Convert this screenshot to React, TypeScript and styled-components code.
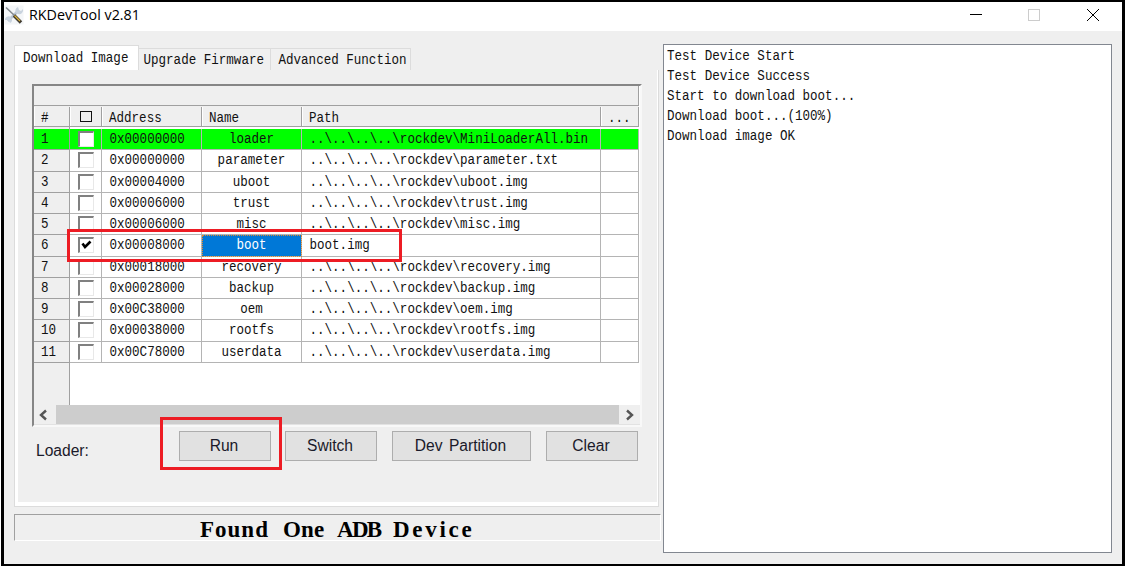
import React from 'react';
import styled, { createGlobalStyle, css } from 'styled-components';

const Global = createGlobalStyle`
  * { box-sizing: border-box; }
  body { margin: 0; background: #fff; overflow: hidden; }
`;

const mono = css`
  font-family: 'Liberation Mono', monospace;
  font-size: 12.55px;
  color: #111;
  white-space: pre;
`;

const Window = styled.div`
  position: relative;
  width: 1124px;
  height: 566px;
  margin-left: 1px;
  border: solid #000;
  border-width: 2px 3px 2px 3px;
  background: #efefef;
  display: flex;
  flex-direction: column;
`;

const TitleBar = styled.header`
  height: 29px;
  flex: none;
  background: #fff;
  display: flex;
  align-items: center;
`;

const Title = styled.span`
  font: 14.3px 'Open Sans', sans-serif;
  color: #000;
  margin-left: 5px;
  flex: 1;
  position: relative;
  top: -2px;
`;

const Logo = styled.svg`
  display: block;
  margin-bottom: 4px;
`;

const Controls = styled.svg`
  width: 160px;
  height: 29px;
  display: block;
`;

const Body = styled.main`
  flex: 1;
  display: flex;
  padding: 13px 10px 11px 10px;
`;

const Left = styled.section`
  width: 647px;
  display: flex;
  flex-direction: column;
`;

const Tabs = styled.nav`
  display: flex;
  align-items: flex-end;
  height: 26px;
  padding-top: 1px;
`;

const Tab = styled.div<{ $w: number; $pad: number; $active?: boolean }>`
  ${mono}
  width: ${p => p.$w}px;
  height: ${p => (p.$active ? 25 : 22)}px;
  padding-left: ${p => p.$pad}px;
  line-height: ${p => (p.$active ? 26 : 25)}px;
  border: solid #dcdcdc;
  border-width: ${p => (p.$active ? '1px 1px 0 1px' : '1px 1px 0 0')};
  background: ${p => (p.$active ? '#fff' : '#f0f0f0')};
`;

const Tall = styled.span`
  display: inline-block;
  transform: scaleY(1.15);
  white-space: pre;
`;

const Page = styled.div`
  width: 645px;
  height: 437px;
  border: solid #dcdcdc;
  border-width: 0 1px 1px 1px;
  background: #fff;
  padding: 0 1px 4px 3px;
  display: flex;
`;

const PageInner = styled.div`
  flex: 1;
  background: #efefef;
  padding: 14px 0 0 14px;
`;

const Grid = styled.div`
  width: 610px;
  height: 343px;
  border: solid;
  border-width: 2px;
  border-color: #868686 #f8f8f8 #f8f8f8 #868686;
  background: #fff;
  display: flex;
  flex-direction: column;
`;

const TopBand = styled.div`
  height: 20px;
  flex: none;
  background: #efefef;
  border: solid #a0a0a0;
  border-width: 0 1px 1px 0;
  margin-right: 1px;
`;

const columns = '36px 32px 100px 100px 299px 38px';

const HeadRow = styled.div`
  display: grid;
  grid-template-columns: ${columns};
  grid-template-rows: 100%;
  height: 21px;
  flex: none;
  background: #efefef;
  margin-right: 1px;
  border-bottom: 1px solid #a0a0a0;
`;

const HeadCell = styled.div<{ $pad?: number }>`
  ${mono}
  line-height: 24px;
  padding-left: ${p => p.$pad ?? 7}px;
  border-right: 1px solid #a0a0a0;
  margin-top: 1px;
  box-shadow: inset 1px 0 #fff;
`;

const HeadBox = styled.span`
  display: block;
  width: 12px;
  height: 11px;
  margin-top: 4px;
  border: 1px solid #111;
`;

const Rows = styled.div`
  flex: 1;
  padding-top: 2px;
  background: linear-gradient(90deg, #efefef 35px, #a0a0a0 35px, #a0a0a0 36px, #fff 36px);
`;

const Row = styled.div<{ $done?: boolean }>`
  display: grid;
  grid-template-columns: ${columns};
  grid-template-rows: 100%;
  height: 21.25px;
  margin-right: 1px;
  background: ${p => (p.$done ? '#00ff00' : 'transparent')};
`;

const Cell = styled.div<{ $center?: boolean; $selected?: boolean; $head?: boolean }>`
  ${mono}
  line-height: 23px;
  padding-left: ${p => (p.$center ? 0 : 7.5)}px;
  text-align: ${p => (p.$center ? 'center' : 'left')};
  border: solid ${p => (p.$head ? '#a0a0a0' : '#b4b4b4')};
  border-width: 0 1px 1px 0;
  ${p => p.$head && css`padding-left: 7px;`}
  ${p => p.$selected && css`
    color: #fff;
    background: #0078d7;
    outline: 1px dotted #e08a30;
    outline-offset: -1px;
  `}
`;

const Check = styled.span`
  display: block;
  width: 16px;
  height: 16px;
  margin-top: 2px;
  background: #fff;
  border: solid;
  border-width: 2px 1px 1px 2px;
  border-color: #808080 #e8e8e8 #e8e8e8 #808080;
  svg { display: block; }
`;

const ScrollBar = styled.div`
  height: 20px;
  flex: none;
  background: #efefef;
  display: flex;
  align-items: flex-start;
  justify-content: space-between;
  border-bottom: 1px solid #e2e2e2;
`;

const Thumb = styled.div`
  width: 563px;
  height: 19px;
  background: #cdcdcd;
`;

const Arrow = styled.svg`
  width: 21px;
  height: 19px;
`;

const Actions = styled.div`
  display: flex;
  margin-top: 4px;
  font: 15.6px 'Liberation Sans', sans-serif;
  color: #1a1a2a;
`;

const LoaderLabel = styled.div`
  width: 147px;
  flex: none;
  padding: 11px 0 0 4px;
`;

const Button = styled.button<{ $w: number; $gap: number }>`
  width: ${p => p.$w}px;
  height: 30px;
  margin: 0 ${p => p.$gap}px 0 0;
  padding: 0 2px 0 0;
  border: 1px solid #adadad;
  background: #e1e1e1;
  font: inherit;
  color: inherit;
  word-spacing: 2px;
  flex: none;
`;

const Status = styled.div`
  width: 647px;
  height: 27px;
  margin-top: 7px;
  padding-left: 185px;
  border: solid;
  border-width: 1px;
  border-color: #a0a0a0 #fff #fff #a0a0a0;
  font: bold 23px/29px 'Liberation Serif', serif;
  color: #000;
  display: flex;
  white-space: pre;
`;

const Word = styled.span<{ $w: number; $track: number }>`
  width: ${p => p.$w}px;
  letter-spacing: ${p => p.$track}px;
`;

const Log = styled.div`
  width: 449px;
  margin-left: 2px;
  border: 1px solid #828790;
  background: #fff;
  padding: 2px 3px;
`;

const LogLine = styled.div`
  ${mono}
  height: 20px;
  line-height: 21px;
`;

const Marker = styled.div<{ $x: number; $y: number; $w: number; $h: number }>`
  position: absolute;
  left: ${p => p.$x - 4}px;
  top: ${p => p.$y - 2}px;
  width: ${p => p.$w}px;
  height: ${p => p.$h}px;
  border: 3px solid #ed1c24;
`;

const rows: [string, string, string][] = [
  ['0x00000000', 'loader', '..\\..\\..\\..\\rockdev\\MiniLoaderAll.bin'],
  ['0x00000000', 'parameter', '..\\..\\..\\..\\rockdev\\parameter.txt'],
  ['0x00004000', 'uboot', '..\\..\\..\\..\\rockdev\\uboot.img'],
  ['0x00006000', 'trust', '..\\..\\..\\..\\rockdev\\trust.img'],
  ['0x00006000', 'misc', '..\\..\\..\\..\\rockdev\\misc.img'],
  ['0x00008000', 'boot', 'boot.img'],
  ['0x00018000', 'recovery', '..\\..\\..\\..\\rockdev\\recovery.img'],
  ['0x00028000', 'backup', '..\\..\\..\\..\\rockdev\\backup.img'],
  ['0x00C38000', 'oem', '..\\..\\..\\..\\rockdev\\oem.img'],
  ['0x00038000', 'rootfs', '..\\..\\..\\..\\rockdev\\rootfs.img'],
  ['0x00C78000', 'userdata', '..\\..\\..\\..\\rockdev\\userdata.img'],
];

const log = [
  'Test Device Start',
  'Test Device Success',
  'Start to download boot...',
  'Download boot...(100%)',
  'Download image OK',
];

const ToolIcon = () => (
  <Logo width="20" height="20" viewBox="0 0 20 20">
    <rect x="0.5" y="0.5" width="19" height="19" fill="#f4f6f8" />
    <path d="M4 16 L14 6" stroke="#b9c5d3" strokeWidth="2.6" />
    <path d="M12 8 a4 4 0 0 1 2-6 l1 3 2 1 2-2 a4 4 0 0 1-5 5z" fill="#c9d3de" />
    <path d="M1 15 a3.5 3.5 0 1 1 5 3 l-1-2-2-1z" fill="#c9d3de" />
    <path d="M2 2.5 L11 11" stroke="#858b90" strokeWidth="1.6" />
    <path d="M10 10.5 L17 17.5" stroke="#3f3a30" strokeWidth="3.4" />
    <path d="M10.5 10.5 L16 16" stroke="#d9b23c" strokeWidth="1.2" />
  </Logo>
);

export default function App() {
  return (
    <>
      <Global />
      <Window>
        <TitleBar>
          <ToolIcon />
          <Title>RKDevTool v2.81</Title>
          <Controls viewBox="0 0 160 29" fill="none" shapeRendering="crispEdges">
            <path d="M8 12.5h12" stroke="#000" />
            <rect x="66.5" y="7.5" width="11" height="11" stroke="#ccc" />
            <path d="M125 7l12 12M137 7l-12 12" stroke="#000" shapeRendering="auto" />
          </Controls>
        </TitleBar>
        <Body>
          <Left>
            <Tabs>
              <Tab $w={125} $pad={8} $active><Tall>Download Image</Tall></Tab>
              <Tab $w={132} $pad={4.5}><Tall>Upgrade Firmware</Tall></Tab>
              <Tab $w={140} $pad={7.5}><Tall>Advanced Function</Tall></Tab>
            </Tabs>
            <Page>
              <PageInner>
                <Grid>
                  <TopBand />
                  <HeadRow>
                    <HeadCell><Tall>#</Tall></HeadCell>
                    <HeadCell $pad={10}><HeadBox /></HeadCell>
                    <HeadCell><Tall>Address</Tall></HeadCell>
                    <HeadCell><Tall>Name</Tall></HeadCell>
                    <HeadCell><Tall>Path</Tall></HeadCell>
                    <HeadCell><Tall>...</Tall></HeadCell>
                  </HeadRow>
                  <Rows>
                    {rows.map(([address, name, path], i) => (
                      <Row key={i} $done={i === 0}>
                        <Cell $head><Tall>{i + 1}</Tall></Cell>
                        <Cell>
                          <Check>
                            {i === 5 && (
                              <svg width="13" height="13" viewBox="0 0 13 13">
                                <path d="M2.5 4.5 L5 8 L10.5 2.5" fill="none" stroke="#000" strokeWidth="2.6" />
                              </svg>
                            )}
                          </Check>
                        </Cell>
                        <Cell><Tall>{address}</Tall></Cell>
                        <Cell $center $selected={i === 5}><Tall>{name}</Tall></Cell>
                        <Cell><Tall>{path}</Tall></Cell>
                        <Cell />
                      </Row>
                    ))}
                  </Rows>
                  <ScrollBar>
                    <Arrow viewBox="0 0 21 19"><path d="M12 5.5l-5 4.5 5 4.5" fill="none" stroke="#555" strokeWidth="2.4" /></Arrow>
                    <Thumb />
                    <Arrow viewBox="0 0 21 19"><path d="M8 5.5l5 4.5-5 4.5" fill="none" stroke="#555" strokeWidth="2.4" /></Arrow>
                  </ScrollBar>
                </Grid>
                <Actions>
                  <LoaderLabel>Loader:</LoaderLabel>
                  <Button $w={92} $gap={14}>Run</Button>
                  <Button $w={92} $gap={15}>Switch</Button>
                  <Button $w={139} $gap={15}>Dev Partition</Button>
                  <Button $w={92} $gap={0}>Clear</Button>
                </Actions>
              </PageInner>
            </Page>
            <Status>
              <Word $w={83} $track={1}>Found </Word>
              <Word $w={54} $track={0.2}>One </Word>
              <Word $w={56} $track={-1.7}>ADB </Word>
              <Word $w={84} $track={2.7}>Device</Word>
            </Status>
          </Left>
          <Log>
            {log.map(line => <LogLine key={line}><Tall>{line}</Tall></LogLine>)}
          </Log>
        </Body>
        <Marker $x={67} $y={229} $w={335} $h={33} />
        <Marker $x={160} $y={417} $w={122} $h={53} />
      </Window>
    </>
  );
}
